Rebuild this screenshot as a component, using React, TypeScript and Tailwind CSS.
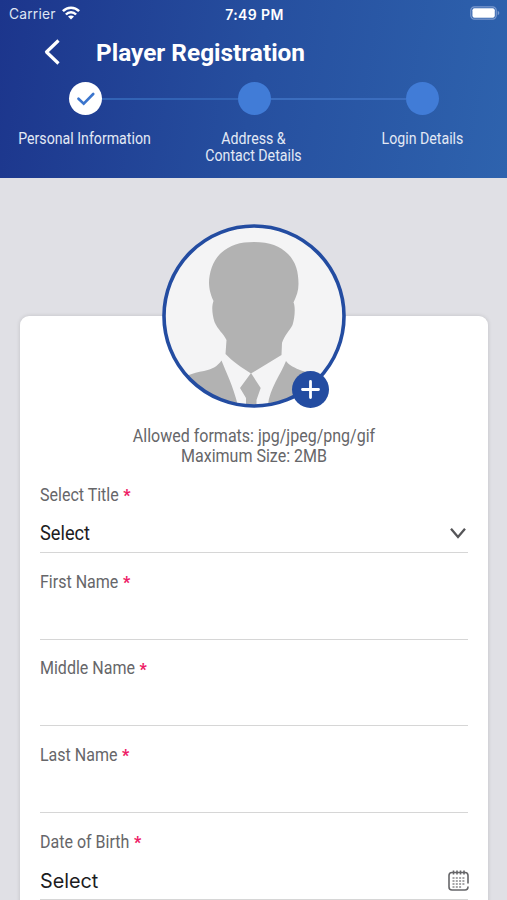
import type { ReactNode } from 'react';
import clsx from 'clsx';

interface Step {
  lines: string[];
  done: boolean;
}

interface FieldProps {
  label: string;
  children?: ReactNode;
}

const STEPS: Step[] = [
  { lines: ['Personal Information'], done: true },
  { lines: ['Address &', 'Contact Details'], done: false },
  { lines: ['Login Details'], done: false },
];

function StatusBar() {
  return (
    <div className="grid h-7 grid-cols-3 items-center pr-[7px] pl-[9px] font-['Inter',sans-serif] text-[14px] text-white">
      <div className="flex items-center gap-[6px]">
        <span className="text-[13.800px] tracking-[0.2px] text-[#dfe5f3]">Carrier</span>
        <svg className="-mt-[2px]" width="18" height="14" viewBox="0 0 18 14" fill="none" stroke="white" strokeWidth="2.5">
          <path d="M0.9 5.2C5.4 0.6 12.6 0.6 17.1 5.2" />
          <path d="M3.9 8.5C6.7 5.6 11.3 5.6 14.1 8.5" />
          <path d="M9 13.6L6 10.6C7.6 9.1 10.4 9.1 12 10.6Z" fill="white" stroke="none" />
        </svg>
      </div>
      <span className="text-center font-semibold tracking-[0.4px] whitespace-nowrap">7:49 PM</span>
      <svg className="-mt-[2px] justify-self-end" width="30" height="14" viewBox="0 0 30 14">
        <rect x="0.8" y="0.8" width="25.4" height="12.4" rx="3.6" fill="none" stroke="#7d9bcf" strokeWidth="1.2" />
        <rect x="2.4" y="2.3" width="22.4" height="9.4" rx="2" fill="white" />
        <path d="M27.7 4.8C29.8 5.6 29.8 8.4 27.7 9.2Z" fill="#7d9bcf" />
      </svg>
    </div>
  );
}

function StepDot({ done }: { done: boolean }) {
  return (
    <div
      className={clsx(
        'flex size-[33px] shrink-0 items-center justify-center rounded-full',
        done ? 'bg-white' : 'bg-[#417cd7]',
      )}
    >
      {done && (
        <svg width="18" height="14" viewBox="0 0 18 14" fill="none" stroke="#3b75cd" strokeWidth="2.6">
          <path d="M1.5 6.7L6.7 11.6L16.2 2" strokeLinecap="round" />
        </svg>
      )}
    </div>
  );
}

function Stepper() {
  return (
    <div className="mt-[6px]">
      <div className="flex items-center pr-[68px] pl-[69px]">
        <StepDot done={STEPS[0].done} />
        <div className="h-[2px] flex-1 bg-[#3263b5]" />
        <StepDot done={STEPS[1].done} />
        <div className="h-[2px] flex-1 bg-[#3b6dbe]" />
        <StepDot done={STEPS[2].done} />
      </div>
      <div className="mt-[15px] grid grid-cols-3 text-center text-[16px] leading-[17px] text-[#e3e9f5]">
        {STEPS.map((step) => (
          <div key={step.lines[0]} className="scale-x-[0.885] whitespace-nowrap">
            {step.lines.map((line) => (
              <p key={line}>{line}</p>
            ))}
          </div>
        ))}
      </div>
    </div>
  );
}

function Avatar() {
  return (
    <div className="relative size-[184px]">
      <svg width="184" height="184" viewBox="0 0 184 184">
        <defs>
          <clipPath id="avatar">
            <circle cx="92" cy="92" r="89" />
          </clipPath>
        </defs>
        <circle cx="92" cy="92" r="90" fill="#f4f4f5" />
        <g clipPath="url(#avatar)" fill="#b2b2b2">
          <path d="M92 18C108 18 118 22 126 30C134 38 136.500 48 136.500 60C136.500 67 134.500 72 131.500 78.500C133.500 82 133 94 130.500 101C128 106 122 112 120 119L119.500 131L89 149.500C80 144 70 137 63.500 130L64.500 116C61 109 56 106 52.500 98C50 90 49.500 82 51.500 77C48 69 47.300 65 47 59C47 49 51 36 59 29C68 21 78 18 92 18Z" />
          <path d="M10 160C22 152 30 149 42 147C50 145 55 143 59.500 136.500C64 148 72 164 76.500 184H10Z" />
          <path d="M124 137C130 146 147 147 165 157V184H105.500C107 165 118 152 124 137Z" />
          <path d="M89 149L98.700 164L94.500 176V184H84V174L78 164Z" />
        </g>
        <circle cx="92" cy="92" r="90" fill="none" stroke="#234ca1" strokeWidth="3.6" />
      </svg>
      <div className="absolute right-[17px] bottom-0 flex size-[37px] items-center justify-center rounded-full bg-[#234ca1]">
        <svg width="19" height="19" viewBox="0 0 19 19" stroke="white" strokeWidth="2.8" strokeLinecap="round">
          <path d="M9.500 1.500V17.500M1.500 9.500H17.500" />
        </svg>
      </div>
    </div>
  );
}

function Field({ label, children }: FieldProps) {
  return (
    <div className="flex h-[86.750px] flex-col border-b border-[#d6d6d6] pt-[18px]">
      <div className="flex h-[22px] origin-left scale-x-[0.915] items-center gap-[5px] text-[17.500px] text-[#666669]">
        <span className="whitespace-nowrap">{label}</span>
        <span className="h-[22px] text-[17px] leading-[23px] font-black text-[#ee1c66]">*</span>
      </div>
      <div className="flex flex-1 items-center justify-between pt-[9px]">{children}</div>
    </div>
  );
}

function ChevronDown() {
  return (
    <svg className="mr-[2px]" width="16" height="12" viewBox="0 0 16 12" fill="none" stroke="#555558" strokeWidth="2.3">
      <path d="M1 1.700L8 9.900L15 1.700" />
    </svg>
  );
}

function CalendarIcon() {
  return (
    <svg className="-mr-[1px]" width="21" height="21" viewBox="0 0 21 21" fill="none" stroke="#666669" strokeWidth="1.600">
      <path d="M20 13.500V5.500C20 3.500 19 2.500 17 2.500H4C2 2.500 1 3.500 1 5.500V17C1 19 2 20 4 20H17C19 20 20 19 20 16.500" />
      <path d="M5.500 0.500V4.500M9 0.500V4.500M12.500 0.500V4.500M16 0.500V4.500" />
      <path d="M4.500 8H17M4.500 11H17M4.500 14H17M4.500 17H14" strokeWidth="1.300" strokeDasharray="2 1.300" stroke="#88888b" />
    </svg>
  );
}

export default function App() {
  return (
    <div className="flex h-[900px] w-full flex-col overflow-hidden bg-[#e0e0e5] font-['Roboto',sans-serif]">
      <header className="h-[178px] shrink-0 bg-linear-[100deg] from-[#1c358c] via-[#264f9f] to-[#2e63ae]">
        <StatusBar />
        <div className="flex h-12 items-center">
          <svg className="ml-[44px]" width="17" height="26" viewBox="0 0 17 26" fill="none" stroke="white" strokeWidth="3.200">
            <path d="M14.500 1.500L2.500 13L14.500 24.500" strokeLinejoin="round" />
          </svg>
          <h1 className="mt-[2px] ml-[35px] text-[24.400px] font-bold text-white">Player Registration</h1>
        </div>
        <Stepper />
      </header>

      <main className="mt-[138px] mr-[19px] ml-[20px] flex h-[700px] shrink-0 flex-col rounded-[9px] bg-white px-[20px] shadow-[0_0_4px_rgba(0,0,0,0.14)]">
        <div className="-mt-[92px] flex justify-center">
          <Avatar />
        </div>
        <div className="mt-[19px] mb-[1px] flex h-[38px] scale-x-[0.915] flex-col text-center text-[17.500px] leading-[19.500px] text-[#666669]">
          <p>Allowed formats: jpg/jpeg/png/gif</p>
          <p>Maximum Size: 2MB</p>
        </div>
        <Field label="Select Title">
          <span className="origin-left scale-x-[0.91] text-[20px] text-[#1c1c1e]">Select</span>
          <ChevronDown />
        </Field>
        <Field label="First Name" />
        <Field label="Middle Name" />
        <Field label="Last Name" />
        <Field label="Date of Birth">
          <span className="mt-[2px] font-['Inter',sans-serif] text-[19.800px] text-[#1c1c1e]">Select</span>
          <CalendarIcon />
        </Field>
      </main>
    </div>
  );
}
